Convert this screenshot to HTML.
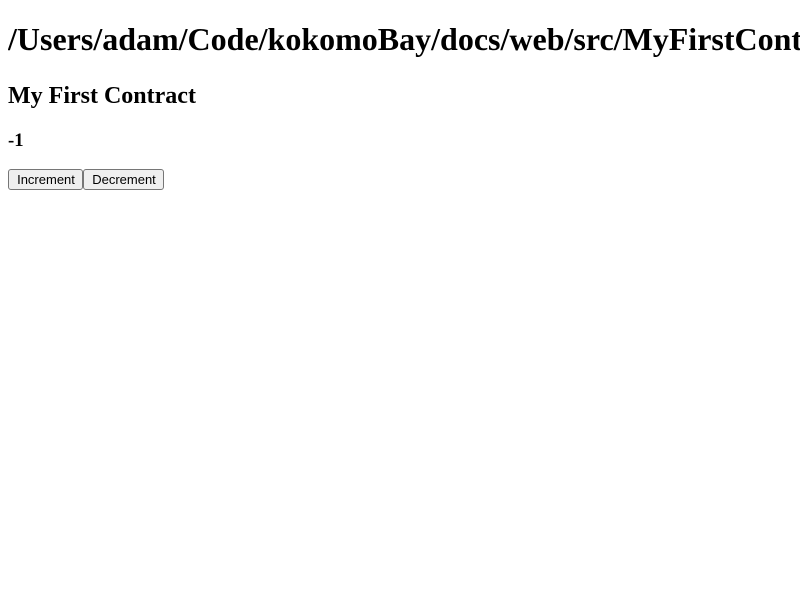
<!DOCTYPE html>
<html style="overflow:hidden"><head><style>
body{margin:8px 0 8px 8px;font-family:"Liberation Serif",serif;color:#000;background:#fff;overflow:hidden;width:792px;}
h1{font-size:32px;margin:21.44px 0 24.5px;white-space:nowrap;overflow:hidden;}
h2{font-size:24px;margin:19.92px 0;}
h3{font-size:18.72px;margin:18.72px 0 16.7px;}
button{font-family:"Liberation Sans",sans-serif;font-size:13px;height:21px;padding:1px 7px 1px 8px;margin:0;background:#efefef;border:1px solid #767676;border-radius:3px;color:#000;vertical-align:top;}
</style></head><body>
<h1>/Users/adam/Code/kokomoBay/docs/web/src/MyFirstContract</h1>
<h2>My First Contract</h2>
<h3>-1</h3>
<div><button style="width:75px">Increment</button><button style="width:81px">Decrement</button></div>
</body></html>
